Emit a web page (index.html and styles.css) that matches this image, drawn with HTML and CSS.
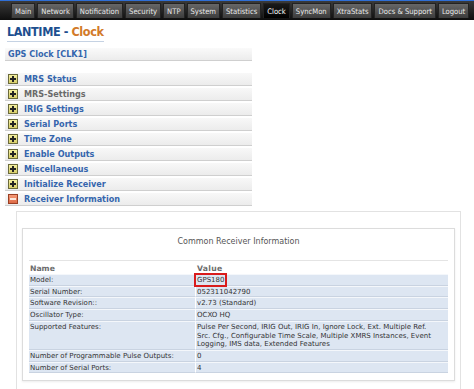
FILE: index.html
```html
<!DOCTYPE html>
<html>
<head>
<meta charset="utf-8">
<link rel="stylesheet" href="styles.css">
</head>
<body>
<nav class="topnav">
  <a class="tab">Main</a>
  <a class="tab">Network</a>
  <a class="tab">Notification</a>
  <a class="tab">Security</a>
  <a class="tab">NTP</a>
  <a class="tab">System</a>
  <a class="tab">Statistics</a>
  <a class="tab active">Clock</a>
  <a class="tab">SyncMon</a>
  <a class="tab">XtraStats</a>
  <a class="tab">Docs &amp; Support</a>
  <a class="tab">Logout</a>
</nav>
<div class="page">
  <h1 class="title"><span class="brand">LANTIME -</span> <span class="sub">Clock</span></h1>
  <div class="menu">
    <div class="menu-head">GPS Clock [CLK1]</div>
    <ul class="sections">
      <li class="sec"><span class="ico plus"></span>MRS Status</li>
      <li class="sec dim"><span class="ico plus"></span>MRS-Settings</li>
      <li class="sec"><span class="ico plus"></span>IRIG Settings</li>
      <li class="sec"><span class="ico plus"></span>Serial Ports</li>
      <li class="sec"><span class="ico plus"></span>Time Zone</li>
      <li class="sec"><span class="ico plus"></span>Enable Outputs</li>
      <li class="sec"><span class="ico plus"></span>Miscellaneous</li>
      <li class="sec"><span class="ico plus"></span>Initialize Receiver</li>
      <li class="sec"><span class="ico minus"></span>Receiver Information</li>
    </ul>
  </div>
  <div class="panel">
    <div class="card">
      <div class="card-title">Common Receiver Information</div>
      <table class="info">
        <thead>
          <tr><th class="c-name">Name</th><th class="c-val">Value</th></tr>
        </thead>
        <tbody>
          <tr><td class="key">Model:</td><td class="val"><span class="hl">GPS180</span></td></tr>
          <tr><td class="key">Serial Number:</td><td class="val">052311042790</td></tr>
          <tr><td class="key">Software Revision::</td><td class="val">v2.73 (Standard)</td></tr>
          <tr><td class="key">Oscillator Type:</td><td class="val">OCXO HQ</td></tr>
          <tr><td class="key">Supported Features:</td><td class="val">Pulse Per Second, IRIG Out, IRIG In, Ignore Lock, Ext. Multiple Ref.<br>Src. Cfg., Configurable Time Scale, Multiple XMRS Instances, Event<br>Logging, IMS data, Extended Features</td></tr>
          <tr><td class="key">Number of Programmable Pulse Outputs:</td><td class="val">0</td></tr>
          <tr><td class="key">Number of Serial Ports:</td><td class="val">4</td></tr>
        </tbody>
      </table>
    </div>
  </div>
</div>
</body>
</html>
```
FILE: styles.css
```css
* { box-sizing: border-box; }
html, body { margin: 0; padding: 0; background: #fff; }
body { font-family: "DejaVu Sans", Verdana, sans-serif; color: #333; }

.topnav {
  height: 20px;
  background: linear-gradient(#3a3a3a, #0e0e0e);
  border-top: 1px solid #2f6fd6;
  display: flex;
  align-items: flex-end;
  gap: 2px;
  padding: 0 0 2px 11px;
}
.tab {
  height: 15px;
  line-height: 15px;
  padding: 0 3px;
  font-family: "DejaVu Sans Condensed", "DejaVu Sans", sans-serif;
  font-size: 7.6px;
  color: #e8e8e8;
  background: linear-gradient(#676767, #3c3c3c);
  border: 1px solid #222;
  border-bottom: none;
  white-space: nowrap;
}
.tab.active {
  background: linear-gradient(#1a1a1a, #000);
  color: #fff;
}

.page { padding: 0 5px; }

.title {
  display: inline-block;
  margin: 3px 0 0 2px;
  font-family: "DejaVu Sans", sans-serif;
  font-stretch: condensed;
  font-size: 12.5px;
  letter-spacing: -0.4px;
  font-weight: bold;
  line-height: 17px;
  border-bottom: 1px solid #c5d2e3;
  padding-bottom: 1px;
}
.brand { color: #1d4f8f; }
.sub { color: #d27a2a; }

.menu { width: 247px; margin-top: 6px; }
.menu-head {
  height: 13px;
  line-height: 12px;
  padding-left: 3px;
  font-size: 8.1px;
  font-weight: bold;
  color: #3565ad;
  background: linear-gradient(#fafafa, #ececec);
  border-bottom: 1px solid #cfcfcf;
}
.sections { list-style: none; margin: 12px 0 0; padding: 0; }
.sec {
  display: flex;
  align-items: center;
  height: 13px;
  margin-bottom: 2px;
  padding-left: 3px;
  font-size: 8.1px;
  font-weight: bold;
  color: #3565ad;
  background: linear-gradient(#f8f8f8, #ececec);
  border-bottom: 1px solid #cfcfcf;
}
.sec.dim { color: #6a6a6a; }
.ico {
  position: relative;
  width: 10px;
  height: 10px;
  margin-right: 6px;
  flex: none;
  border: 1px solid #6b6a3a;
}
.ico.plus { background: linear-gradient(#f3eea0, #d8cf6a); }
.ico.minus { background: linear-gradient(#f59a78, #dd6a45); border-color: #9a3f24; }
.ico::before {
  content: "";
  position: absolute;
  left: 1px; right: 1px; top: 3px;
  height: 2px;
  background: #222;
}
.ico.minus::before { background: #fbe7dc; }
.ico.plus::after {
  content: "";
  position: absolute;
  top: 1px; bottom: 1px; left: 3px;
  width: 2px;
  background: #222;
}

.panel {
  margin: 5px 0 0 11px;
  width: 445px;
  height: 185px;
  border: 1px solid #e2e2e2;
  border-bottom: none;
  padding: 16px 5px 0 5px;
}
.card {
  border: 1px solid #dcdcdc;
  box-shadow: 0 1px 2px rgba(0,0,0,0.08);
  padding: 8px 6px 7px 6px;
}
.card-title {
  text-align: center;
  font-size: 8px;
  color: #555;
  line-height: 10px;
  padding-bottom: 13px;
}
.info {
  width: 100%;
  border-collapse: separate;
  border-spacing: 0;
  font-size: 7px;
  line-height: 8.7px;
  color: #333;
}
.info th {
  text-align: left;
  font-weight: bold;
  font-size: 7.7px;
  line-height: 10px;
  color: #6b6b6b;
  border-top: 1px solid #e4e4e4;
  padding: 3px 1px 0 1px;
}
.info th.c-val { letter-spacing: 0.3px; }
.info td {
  background: #dde6f2;
  border-top: 1px solid #f4f7fb;
  border-bottom: 1px solid #c9d3e1;
  padding: 1px 1px 0 1px;
  vertical-align: top;
}
.info td.key {
  border-right: 1px solid #fff;
}
.info td.val { white-space: nowrap; }
.c-name { width: 167px; }
.hl {
  outline: 2px solid #d91c1c;
  outline-offset: 1px;
}
```
